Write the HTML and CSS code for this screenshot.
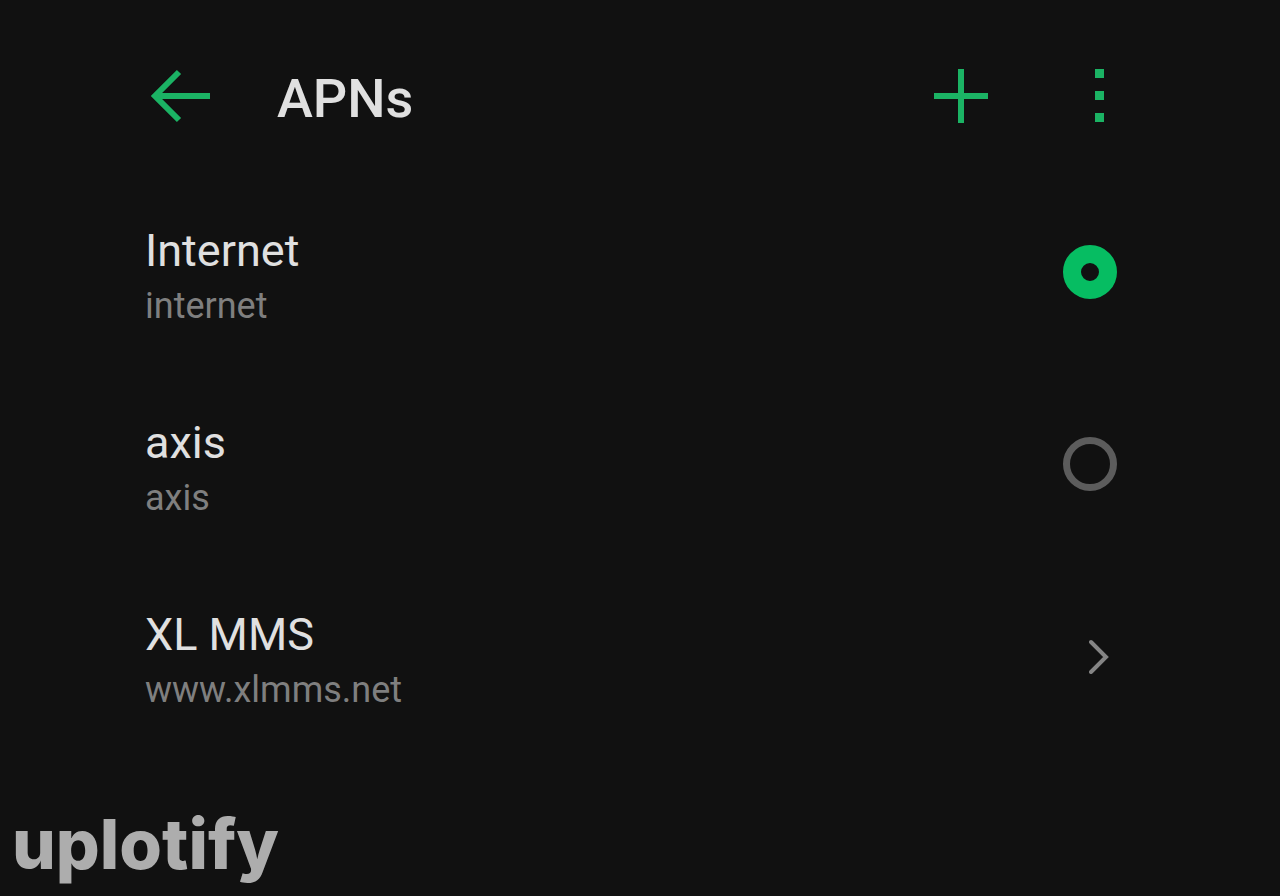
FILE: index.html
```html
<!DOCTYPE html>
<html lang="en">
<head>
  <meta charset="UTF-8">
  <meta name="viewport" content="width=device-width, initial-scale=1">
  <title>APNs</title>
  <link rel="stylesheet" href="styles.css">
</head>
<body>
  <header class="topbar">
    <button type="button" class="icon-btn" aria-label="Back">
      <svg width="60" height="54" viewBox="0 0 60 54" fill="none" stroke="currentColor" stroke-width="6">
        <path d="M28 3 L4 27 L28 51 M4 27 H59"/>
      </svg>
    </button>
    <h1 class="title">APNs</h1>
    <div class="actions">
      <button type="button" class="icon-btn" aria-label="Add APN">
        <svg width="54" height="54" viewBox="0 0 54 54" fill="currentColor">
          <path d="M24 0h6v24h24v6H30v24h-6V30H0v-6h24z"/>
        </svg>
      </button>
      <button type="button" class="icon-btn" aria-label="More options">
        <svg width="9" height="54" viewBox="0 0 9 54" fill="currentColor">
          <path d="M0 0h9v9H0zM0 22h9v9H0zM0 44h9v9H0z"/>
        </svg>
      </button>
    </div>
  </header>

  <main class="apn-list">
    <label class="apn" for="apn-internet">
      <span class="apn-text">
        <span class="apn-name">Internet</span>
        <span class="apn-value">internet</span>
      </span>
      <input type="radio" class="radio" name="apn" id="apn-internet" checked>
    </label>
    <label class="apn" for="apn-axis">
      <span class="apn-text">
        <span class="apn-name">axis</span>
        <span class="apn-value">axis</span>
      </span>
      <input type="radio" class="radio" name="apn" id="apn-axis">
    </label>
    <a class="apn" href="#">
      <span class="apn-text">
        <span class="apn-name">XL MMS</span>
        <span class="apn-value">www.xlmms.net</span>
      </span>
      <svg class="chevron" width="20" height="36" viewBox="0 0 20 36" fill="none" stroke="currentColor" stroke-width="4" stroke-linecap="round">
        <path d="M2 4 L17 19 L2 34"/>
      </svg>
    </a>
  </main>

  <footer class="brand">uplotify</footer>
</body>
</html>
```

FILE: styles.css
```css
* {
  box-sizing: border-box;
}

body {
  margin: 0;
  background-color: #111111;
  color: #e0e0e0;
  font-family: Roboto, sans-serif;
}

.topbar {
  display: flex;
  align-items: center;
  padding: 60px 176px 44px 151px;
}

.icon-btn {
  display: flex;
  align-items: center;
  height: 72px;
  padding: 0;
  border: none;
  background: none;
  color: #1bb364;
  cursor: pointer;
}

.title {
  margin: 0 0 0 66px;
  padding-top: 6px;
  font-size: 54px;
  font-weight: 500;
  line-height: 64px;
}

.actions {
  display: flex;
  gap: 107px;
  margin-left: auto;
}

.apn {
  display: flex;
  align-items: center;
  justify-content: space-between;
  min-height: 192px;
  padding: 0 163px 0 145px;
  color: inherit;
  text-decoration: none;
  cursor: pointer;
}

.apn-text {
  display: flex;
  flex-direction: column;
  gap: 3px;
  padding-top: 9px;
}

.apn-name {
  font-size: 45px;
  line-height: 56px;
}

.apn-value {
  color: #7f7f7f;
  font-size: 36px;
  line-height: 48px;
}

.radio {
  appearance: none;
  width: 54px;
  height: 54px;
  margin: 0;
  border: 7px solid #5c5c5c;
  border-radius: 50%;
}

.radio:checked {
  border: 18px solid #06bd62;
}

.chevron {
  margin-right: 8px;
  color: #858585;
}

.brand {
  padding: 52px 12px 0;
  color: #adadad;
  font-family: Inter, sans-serif;
  font-size: 69px;
  font-weight: 800;
  line-height: 80px;
}
```
